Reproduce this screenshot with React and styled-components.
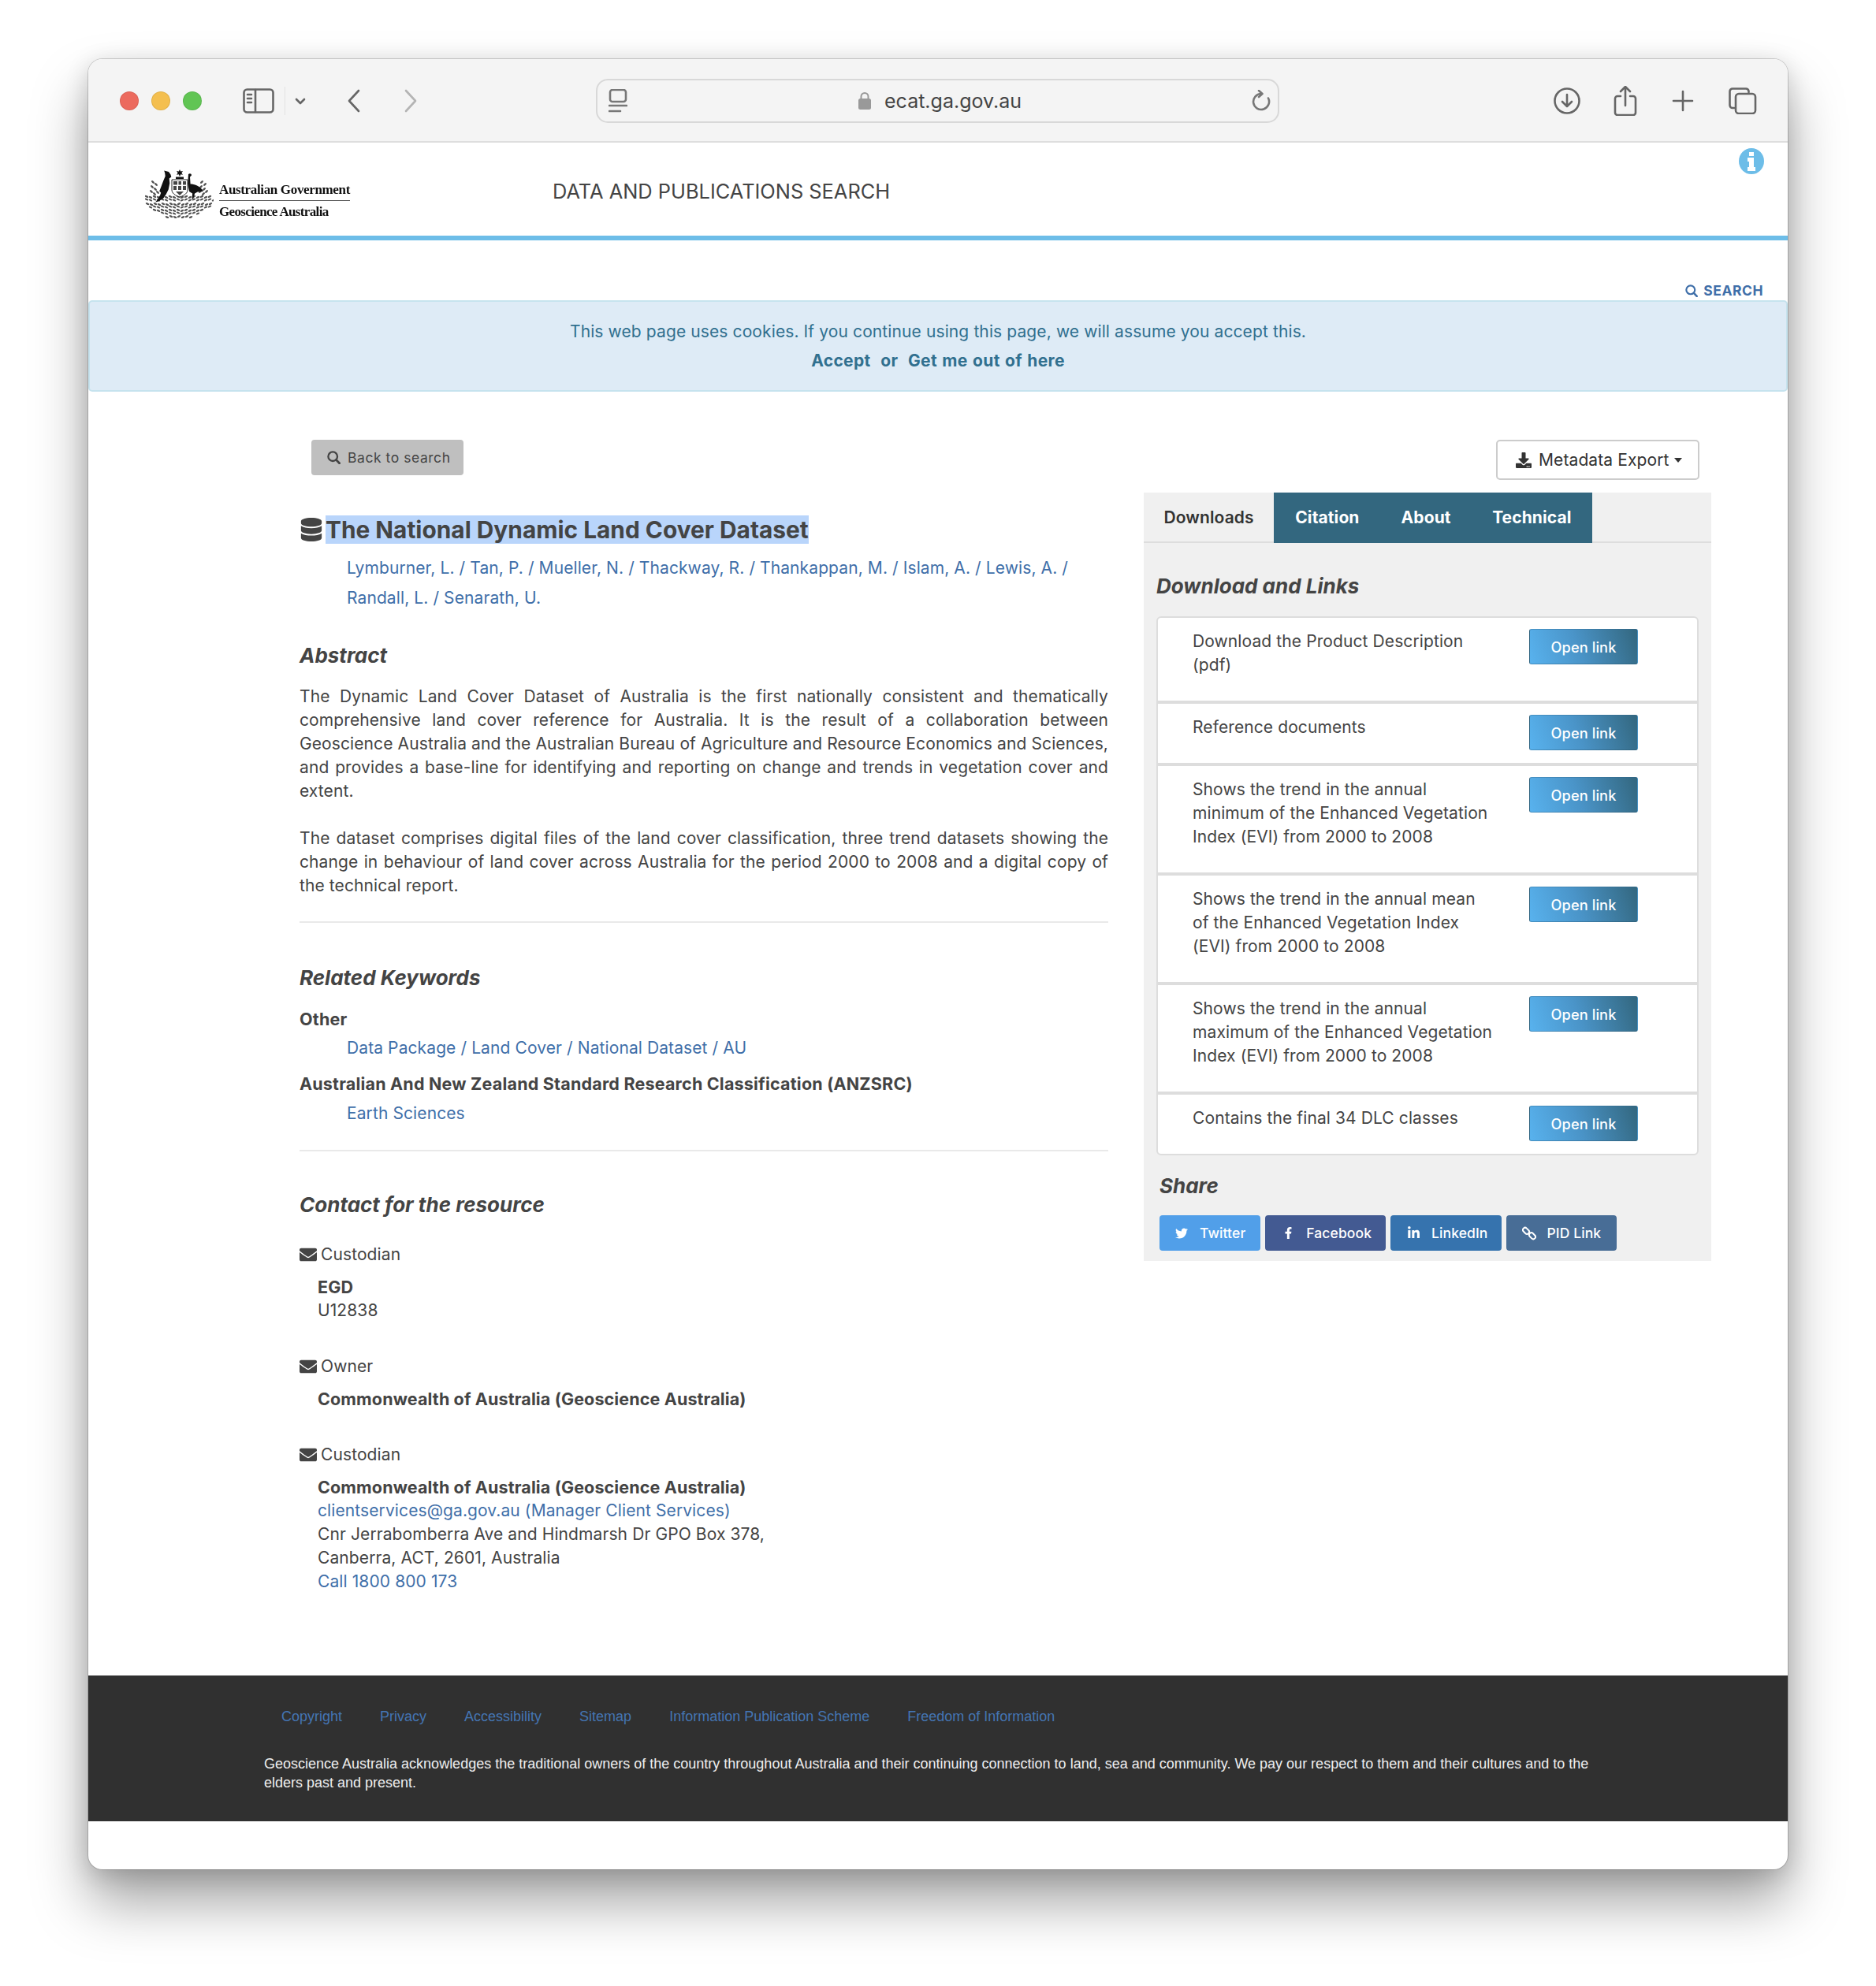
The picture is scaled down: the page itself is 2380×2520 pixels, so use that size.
import React from 'react';
import styled, { createGlobalStyle } from 'styled-components';
import {
  FaDatabase,
  FaEnvelope,
  FaDownload,
  FaTwitter,
  FaFacebookF,
  FaLinkedinIn,
} from 'react-icons/fa';

const GlobalStyle = createGlobalStyle`
  html, body {
    margin: 0;
    background: #fff;
  }
  body {
    font-family: Inter, "Noto Sans", sans-serif;
    font-size: 21px;
    line-height: 30px;
    color: #444;
  }
  * { box-sizing: border-box; }
`;

const Page = styled.div`
  width: 2380px;
  height: 2520px;
  padding: 75px 112px 0;
  overflow: hidden;
`;

const Window = styled.div`
  width: 2156px;
  height: 2297px;
  border-radius: 18px;
  background: #fff;
  overflow: hidden;
  box-shadow: 0 0 0 1px rgba(0, 0, 0, 0.16), 0 42px 70px 0 rgba(0, 0, 0, 0.36), 0 6px 30px rgba(0, 0, 0, 0.16);
  position: relative;
`;

const Toolbar = styled.div`
  height: 106px;
  background: #f4f4f4;
  border-bottom: 2px solid #dedede;
  display: flex;
  align-items: center;
  padding: 2px 0 0 40px;
  color: #666;
`;

const Lights = styled.div`
  display: flex;
  gap: 16px;
  margin-right: 52px;
`;

const Light = styled.span`
  width: 24px;
  height: 24px;
  border-radius: 50%;
  background: ${(p) => p.$color};
  box-shadow: inset 0 0 0 1px rgba(0, 0, 0, 0.08);
`;

const ToolIcon = styled.svg`
  display: block;
  flex: none;
  margin-left: ${(p) => p.$left || 0}px;
  fill: none;
  stroke: ${(p) => p.$stroke || '#666'};
  stroke-width: 2.6;
  stroke-linecap: round;
  stroke-linejoin: round;
`;

const ToolDivider = styled.span`
  width: 1px;
  height: 36px;
  margin-left: 13px;
  background: #e2e2e2;
`;

const UrlBar = styled.div`
  width: 867px;
  height: 56px;
  margin-left: 226px;
  border: 2px solid #d8d8d8;
  border-radius: 15px;
  display: flex;
  align-items: center;
  justify-content: space-between;
  padding: 0 9px 0 14px;
`;

const UrlText = styled.div`
  display: flex;
  align-items: center;
  gap: 16px;
  font-size: 25px;
  color: #444;
`;

const RightTools = styled.div`
  display: flex;
  align-items: center;
`;

const Header = styled.header`
  height: 124px;
  border-bottom: 6px solid #6dbde8;
  display: flex;
  align-items: flex-start;
  position: relative;
`;

const Logo = styled.div`
  display: flex;
  align-items: flex-start;
  margin: 34px 0 0 72px;
  width: 517px;
  filter: blur(0.35px);
`;

const LogoWords = styled.div`
  margin: 16px 0 0 7px;
  font-family: "Liberation Serif", serif;
  font-weight: 700;
  color: #111;
  font-size: 17px;
  line-height: 20px;
  letter-spacing: -0.35px;
  width: 166px;
  white-space: nowrap;
`;

const LogoLine = styled.div`
  &:first-child {
    border-bottom: 1.5px solid #555;
    padding-bottom: 3px;
    margin-bottom: 4px;
  }
  &:last-child {
    letter-spacing: -0.65px;
  }
`;

const SiteTitle = styled.div`
  font-size: 25.4px;
  margin-top: 46px;
  line-height: 32px;
  color: #444;
`;

const InfoBadge = styled.a`
  position: absolute;
  top: 7px;
  right: 30px;
  line-height: 0;
`;

const SearchRow = styled.div`
  height: 76px;
  display: flex;
  justify-content: flex-end;
  align-items: flex-start;
  padding: 49px 31px 0 0;
`;

const SearchLink = styled.a`
  display: flex;
  align-items: center;
  gap: 7px;
  font-size: 17.5px;
  font-weight: 700;
  letter-spacing: 0.5px;
  color: #3f6fa9;
`;

const CookieBar = styled.div`
  height: 116px;
  background: #deebf6;
  border: 2px solid #c6e3ee;
  border-radius: 5px;
  color: #31708f;
  text-align: center;
  line-height: 37px;
  padding-top: 19px;
  letter-spacing: 0.11px;
`;

const CookieActions = styled.div`
  font-weight: 700;
  word-spacing: 1px;
  letter-spacing: 0.35px;
`;

const Columns = styled.div`
  display: grid;
  grid-template-columns: 1026px 720px;
  column-gap: 45px;
  padding: 61px 0 0 268px;
`;

const Main = styled.main``;

const BackButton = styled.a`
  display: inline-flex;
  align-items: center;
  gap: 9px;
  height: 45px;
  width: 193px;
  margin-left: 15px;
  padding-left: 20px;
  background: #bfbfbf;
  border-radius: 4px;
  font-size: 17.5px;
  letter-spacing: 0.55px;
  color: #444;
`;

const Title = styled.h1`
  display: flex;
  align-items: center;
  gap: 3px;
  margin: 51px 0 0;
  font-size: 29.85px;
  line-height: 36px;
  font-weight: 700;
  color: #444;
  svg { font-size: 30px; flex: none; }
`;

const Selected = styled.span`
  background: #b9d5fb;
`;

const Indented = styled.div`
  padding-left: 60px;
  margin-top: ${(p) => p.$top || 0}px;
  line-height: ${(p) => p.$line || 30}px;
  color: #3f6fa9;
  letter-spacing: 0.1px;
`;

const SectionTitle = styled.h2`
  margin: ${(p) => p.$top || 0}px 0 0;
  font-size: 26px;
  line-height: 32px;
  font-weight: 700;
  font-style: italic;
  color: #444;
`;

const Para = styled.p`
  margin: ${(p) => p.$top || 0}px 0 0;
  text-align: justify;
  letter-spacing: 0.1px;
`;

const Rule = styled.hr`
  border: 0;
  height: 2px;
  background: #e9e9e9;
  margin: ${(p) => p.$top}px 0 0;
`;

const Label = styled.div`
  margin-top: ${(p) => p.$top || 0}px;
  font-size: 21.5px;
  font-weight: 700;
  letter-spacing: 0.2px;
`;

const ContactRole = styled.div`
  display: flex;
  align-items: center;
  gap: 5px;
  margin-top: ${(p) => p.$top || 0}px;
  letter-spacing: 0.1px;
  svg { font-size: 22px; }
`;

const ContactBody = styled.div`
  margin: 11px 0 0 23px;
  letter-spacing: 0.1px;
  a { color: #3f6fa9; display: block; }
  strong { font-size: 21.5px; font-weight: 700; display: block; letter-spacing: 0.13px; }
`;

const Side = styled.aside``;

const ExportRow = styled.div`
  display: flex;
  justify-content: flex-end;
  padding-right: 15px;
  margin-bottom: 16px;
`;

const ExportButton = styled.a`
  display: inline-flex;
  align-items: center;
  width: 258px;
  height: 51px;
  padding-left: 23px;
  background: #fff;
  border: 2px solid #ccc;
  border-radius: 5px;
  color: #333;
  letter-spacing: 0.1px;
  svg { font-size: 20px; margin-right: 9px; }
`;

const Caret = styled.span`
  margin-left: 7px;
  border-top: 6px solid #333;
  border-left: 5.5px solid transparent;
  border-right: 5.5px solid transparent;
`;

const Panel = styled.div`
  background: #f0f0f0;
  height: 975px;
  padding-bottom: 14px;
`;

const Tabs = styled.div`
  display: flex;
  height: 64px;
  border-bottom: 2px solid #ddd;
`;

const Tab = styled.a`
  height: 64px;
  display: flex;
  align-items: center;
  padding: 0 ${(p) => p.$pad}px;
  font-weight: ${(p) => (p.$active ? 600 : 700)};
  letter-spacing: 0.1px;
  background: ${(p) => (p.$active ? 'transparent' : '#33677f')};
  color: ${(p) => (p.$active ? '#333' : '#fff')};
`;

const PanelInner = styled.div`
  padding: 39px 16px 0 16px;
`;

const Card = styled.div`
  margin-top: 22px;
  background: #fff;
  border: 2px solid #ddd;
  border-radius: 6px;
  overflow: hidden;
`;

const LinkRow = styled.div`
  display: grid;
  grid-template-columns: 385px 138px;
  column-gap: 42px;
  padding: 14px 0 0 44px;
  & + & { border-top: 4px solid #ddd; }
`;

const LinkText = styled.div`
  padding: 1px 0 30px;
  letter-spacing: 0.1px;
`;

const OpenLink = styled.a`
  display: flex;
  align-items: center;
  justify-content: center;
  height: 45px;
  margin-bottom: 16px;
  border: 1px solid rgba(40, 90, 120, 0.35);
  border-radius: 3px;
  background: linear-gradient(72deg, #58b2ee 0%, #4a94c8 45%, #33677f 100%);
  color: #fff;
  font-size: 18.2px;
  font-weight: 500;
  letter-spacing: 0.1px;
`;

const ShareRow = styled.div`
  display: flex;
  gap: 6px;
  margin: 21px 0 0 4px;
`;

const ShareButton = styled.a`
  display: flex;
  align-items: center;
  height: 45px;
  padding: ${(p) => p.$pad};
  gap: ${(p) => p.$gap}px;
  border-radius: 4px;
  background: ${(p) => p.$color};
  color: #fff;
  font-size: 17.5px;
  font-weight: 500;
  letter-spacing: 0.1px;
  svg { flex: none; }
`;

const ShareTitle = styled(SectionTitle)`
  padding-left: 4px;
`;

const Footer = styled.footer`
  margin-top: 104px;
  height: 185px;
  background: #303030;
  padding: 38px 0 0 223px;
  font-family: "Liberation Sans", Arial, sans-serif;
  font-size: 18px;
  color: #eee;
`;

const FooterLinks = styled.nav`
  display: flex;
  gap: 48px;
  padding-left: 22px;
  color: #4475b3;
  line-height: 28px;
`;

const Acknowledge = styled.p`
  margin: 34px 0 0;
  width: 1700px;
  line-height: 24px;
`;

// Coat of arms foliage: rows of small leaves, like the scaled-down logo
const leafSpots = [];
[
  [2, 85, 34], [0, 86, 38], [3, 83, 43], [5, 81, 47], [12, 74, 51], [20, 66, 55], [28, 58, 59],
].forEach(([from, to, y], row) => {
  for (let x = from; x <= to; x += 5) {
    leafSpots.push([x + (row % 2) * 2, y + ((x / 5) % 2), x < 43 ? 25 : -25]);
  }
});
[
  [10, 16], [14, 19], [9, 22], [13, 25], [8, 28], [12, 31], [16, 29],
  [72, 16], [76, 19], [71, 22], [75, 25], [70, 28], [74, 31], [78, 28],
].forEach(([x, y]) => leafSpots.push([x, y, x < 43 ? 40 : -40]));

const Crest = () => (
  <svg width="87" height="62" viewBox="0 0 87 62" aria-hidden="true">
    <g fill="#111">
      {leafSpots.map(([x, y, r]) => (
        <ellipse key={`${x}-${y}`} cx={x} cy={y} rx="2.4" ry="1.2" transform={`rotate(${r} ${x} ${y})`} opacity="0.72" />
      ))}
      <path d="M44 0l1.2 2.6 2.8-.5-1.6 2.3 1.6 2.3-2.8-.5L44 9l-1.2-2.8-2.8.5 1.6-2.3L40 2.1l2.8.5z" />
      <path d="M39 9.5h10V12H39z" />
      {/* kangaroo */}
      <path d="M30 3l2.5 3.5.8 3-2.6 2 .6 6-1.6 8-3 6-3.5 5-6 4-4 1 3-4 3-5 1-3-2-2 2-5 3-8 2.5-6-.5-4-1-3z" />
      {/* emu */}
      <path d="M55 6c2-1.500 4-.5 4 1.500l-2 2 .6 9c5 0 11 2.500 15 7l1 2.500-7 .5-3.500 2-2 7h-1.500l.5-7-4-2.500-2-10 .5-6z" />
    </g>
    <path d="M34 13h20v13c0 4-4 7-10 9-6-2-10-5-10-9z" fill="#fff" stroke="#222" strokeWidth="1" />
    <g fill="#222">
      <path d="M36 15h5v4.500h-5zM42.500 15h3.500v4.500h-3.500zM48 15h4v4.500h-4zM36 21h4v5h-4zM42 21h4v5h-4zM48 21h4v5h-4z" opacity="0.85" />
      <path d="M39 28h10l-5 5z" opacity="0.85" />
    </g>
  </svg>
);

const links = [
  'Download the Product Description (pdf)',
  'Reference documents',
  'Shows the trend in the annual minimum of the Enhanced Vegetation Index (EVI) from 2000 to 2008',
  'Shows the trend in the annual mean of the Enhanced Vegetation Index (EVI) from 2000 to 2008',
  'Shows the trend in the annual maximum of the Enhanced Vegetation Index (EVI) from 2000 to 2008',
  'Contains the final 34 DLC classes',
];

const ChainIcon = () => (
  <svg width="18" height="18" viewBox="0 0 18 18" fill="none" stroke="#fff" strokeWidth="2">
    <rect x="0.5" y="3" width="9" height="5.6" rx="2.8" transform="rotate(45 5 5.8)" />
    <rect x="8.5" y="9.4" width="9" height="5.6" rx="2.8" transform="rotate(45 13 12.2)" />
  </svg>
);

const SearchIcon = ({ size = 17 }) => (
  <svg width={size} height={size} viewBox="0 0 17 17" fill="none" stroke="currentColor" strokeWidth="2.3" strokeLinecap="round">
    <circle cx="7.2" cy="7.2" r="5.8" />
    <path d="M11.6 11.6l4 4.2" strokeWidth="2.8" />
  </svg>
);

const InfoIcon = () => (
  <svg width="32" height="33" viewBox="0 0 32 33" aria-hidden="true">
    <ellipse cx="16" cy="16.5" rx="16" ry="16.5" fill="#6dbde8" />
    <path d="M13 5h6v5h-6zM11 12h8v12h2v5H11v-5h2v-7h-2z" fill="#fff" />
  </svg>
);

export default function App() {
  return (
    <Page>
      <GlobalStyle />
      <Window>
        <Toolbar>
          <Lights>
            <Light $color="#ec6a5e" />
            <Light $color="#f4bf4f" />
            <Light $color="#61c554" />
          </Lights>
          <ToolIcon width="40" height="32" viewBox="0 0 40 32" strokeWidth="2.4">
            <rect x="1.5" y="1.5" width="37" height="29" rx="4" />
            <path d="M16 2v28M6 8h5M6 13h5M6 18h5" />
          </ToolIcon>
          <ToolDivider />
          <ToolIcon $left={12} width="14" height="9" viewBox="0 0 14 9">
            <path d="M2 2l5 5 5-5" />
          </ToolIcon>
          <ToolIcon $left={52} width="18" height="30" viewBox="0 0 18 30" strokeWidth="3">
            <path d="M15 2L3 15l12 13" />
          </ToolIcon>
          <ToolIcon $left={54} $stroke="#b4b4b4" width="18" height="30" viewBox="0 0 18 30" strokeWidth="3">
            <path d="M3 2l12 13L3 28" />
          </ToolIcon>
          <UrlBar>
            <ToolIcon width="24" height="30" viewBox="0 0 24 30" strokeWidth="2" $stroke="#777">
              <rect x="2" y="1" width="20" height="15" rx="3" />
              <path d="M1 21h22M1 28h14" />
            </ToolIcon>
            <UrlText>
              <svg width="18" height="24" viewBox="0 0 18 24" aria-hidden="true">
                <path d="M4.5 10V6.5a4.5 4.5 0 019 0V10" fill="none" stroke="#999" strokeWidth="2" />
                <rect x="1" y="9" width="16" height="14" rx="2.5" fill="#999" />
              </svg>
              ecat.ga.gov.au
            </UrlText>
            <ToolIcon width="24" height="28" viewBox="0 0 24 28" strokeWidth="1.8" $stroke="#777">
              <path d="M12 5a10 10 0 1 0 9 5.5" />
              <path d="M9 1l4.5 4L9 9" />
            </ToolIcon>
          </UrlBar>
          <RightTools>
            <ToolIcon $left={348} width="34" height="34" viewBox="0 0 34 34" strokeWidth="2.4">
              <circle cx="17" cy="17" r="15.5" />
              <path d="M17 9v15M11 18l6 6 6-6" />
            </ToolIcon>
            <ToolIcon $left={42} width="30" height="38" viewBox="0 0 30 38" strokeWidth="2.4">
              <path d="M9 13H5a3 3 0 00-3 3v18a3 3 0 003 3h20a3 3 0 003-3V16a3 3 0 00-3-3h-4" />
              <path d="M15 25V2M9 7l6-6 6 6" />
            </ToolIcon>
            <ToolIcon $left={44} width="28" height="28" viewBox="0 0 28 28" strokeWidth="2.8">
              <path d="M14 2v24M2 14h24" />
            </ToolIcon>
            <ToolIcon $left={44} width="36" height="34" viewBox="0 0 36 34" strokeWidth="2.6">
              <rect x="9" y="8" width="25" height="25" rx="4" />
              <path d="M7 26H5a3.5 3.5 0 01-3.5-3.5V5A3.5 3.5 0 015 1.5h17A3.5 3.5 0 0125.5 5v1" />
            </ToolIcon>
          </RightTools>
        </Toolbar>

        <Header>
          <Logo>
            <Crest />
            <LogoWords>
              <LogoLine>Australian Government</LogoLine>
              <LogoLine>Geoscience Australia</LogoLine>
            </LogoWords>
          </Logo>
          <SiteTitle>DATA AND PUBLICATIONS SEARCH</SiteTitle>
          <InfoBadge>
            <InfoIcon />
          </InfoBadge>
        </Header>

        <SearchRow>
          <SearchLink>
            <SearchIcon size={16} /> SEARCH
          </SearchLink>
        </SearchRow>

        <CookieBar>
          <div>This web page uses cookies. If you continue using this page, we will assume you accept this.</div>
          <CookieActions>Accept &nbsp;or&nbsp; Get me out of here</CookieActions>
        </CookieBar>

        <Columns>
          <Main>
            <BackButton>
              <SearchIcon /> Back to search
            </BackButton>
            <Title>
              <FaDatabase />
              <Selected>The National Dynamic Land Cover Dataset</Selected>
            </Title>
            <Indented $top={12} $line={38}>
              Lymburner, L. / Tan, P. / Mueller, N. / Thackway, R. / Thankappan, M. / Islam, A. / Lewis, A. / Randall, L. / Senarath, U.
            </Indented>

            <SectionTitle $top={38}>Abstract</SectionTitle>
            <Para $top={21}>
              The Dynamic Land Cover Dataset of Australia is the first nationally consistent and thematically comprehensive land cover reference for Australia. It is the result of a collaboration between Geoscience Australia and the Australian Bureau of Agriculture and Resource Economics and Sciences, and provides a base-line for identifying and reporting on change and trends in vegetation cover and extent.
            </Para>
            <Para $top={30}>
              The dataset comprises digital files of the land cover classification, three trend datasets showing the change in behaviour of land cover across Australia for the period 2000 to 2008 and a digital copy of the technical report.
            </Para>
            <Rule $top={30} />

            <SectionTitle $top={54}>Related Keywords</SectionTitle>
            <Label $top={21}>Other</Label>
            <Indented $top={7}>Data Package / Land Cover / National Dataset / AU</Indented>
            <Label $top={15}>Australian And New Zealand Standard Research Classification (ANZSRC)</Label>
            <Indented $top={8}>Earth Sciences</Indented>
            <Rule $top={31} />

            <SectionTitle $top={52}>Contact for the resource</SectionTitle>
            <ContactRole $top={32}>
              <FaEnvelope /> Custodian
            </ContactRole>
            <ContactBody>
              <strong>EGD</strong>
              U12838
            </ContactBody>
            <ContactRole $top={41}>
              <FaEnvelope /> Owner
            </ContactRole>
            <ContactBody>
              <strong>Commonwealth of Australia (Geoscience Australia)</strong>
            </ContactBody>
            <ContactRole $top={41}>
              <FaEnvelope /> Custodian
            </ContactRole>
            <ContactBody>
              <strong>Commonwealth of Australia (Geoscience Australia)</strong>
              <a>clientservices@ga.gov.au (Manager Client Services)</a>
              Cnr Jerrabomberra Ave and Hindmarsh Dr GPO Box 378,
              <br />
              Canberra, ACT, 2601, Australia
              <a>Call 1800 800 173</a>
            </ContactBody>
          </Main>

          <Side>
            <ExportRow>
              <ExportButton>
                <FaDownload /> Metadata Export
                <Caret />
              </ExportButton>
            </ExportRow>
            <Panel>
              <Tabs>
                <Tab $active $pad={25.5}>Downloads</Tab>
                <Tab $pad={27}>Citation</Tab>
                <Tab $pad={26}>About</Tab>
                <Tab $pad={26.5}>Technical</Tab>
              </Tabs>
              <PanelInner>
                <SectionTitle>Download and Links</SectionTitle>
                <Card>
                  {links.map((text) => (
                    <LinkRow key={text}>
                      <LinkText>{text}</LinkText>
                      <OpenLink>Open link</OpenLink>
                    </LinkRow>
                  ))}
                </Card>
                <ShareTitle $top={23}>Share</ShareTitle>
                <ShareRow>
                  <ShareButton $color="#519fe9" $pad="0 19px 0 20px" $gap={15}>
                    <FaTwitter size={16} /> Twitter
                  </ShareButton>
                  <ShareButton $color="#435a92" $pad="0 18px 0 22px" $gap={15}>
                    <FaFacebookF size={15} /> Facebook
                  </ShareButton>
                  <ShareButton $color="#3673ae" $pad="0 18px 0 21px" $gap={14}>
                    <FaLinkedinIn size={17} /> LinkedIn
                  </ShareButton>
                  <ShareButton $color="#486d96" $pad="0 20px 0 20px" $gap={13}>
                    <ChainIcon /> PID Link
                  </ShareButton>
                </ShareRow>
              </PanelInner>
            </Panel>
          </Side>
        </Columns>

        <Footer>
          <FooterLinks>
            <a>Copyright</a>
            <a>Privacy</a>
            <a>Accessibility</a>
            <a>Sitemap</a>
            <a>Information Publication Scheme</a>
            <a>Freedom of Information</a>
          </FooterLinks>
          <Acknowledge>
            Geoscience Australia acknowledges the traditional owners of the country throughout Australia and their continuing connection to land, sea and community. We pay our respect to them and their cultures and to the elders past and present.
          </Acknowledge>
        </Footer>
      </Window>
    </Page>
  );
}
